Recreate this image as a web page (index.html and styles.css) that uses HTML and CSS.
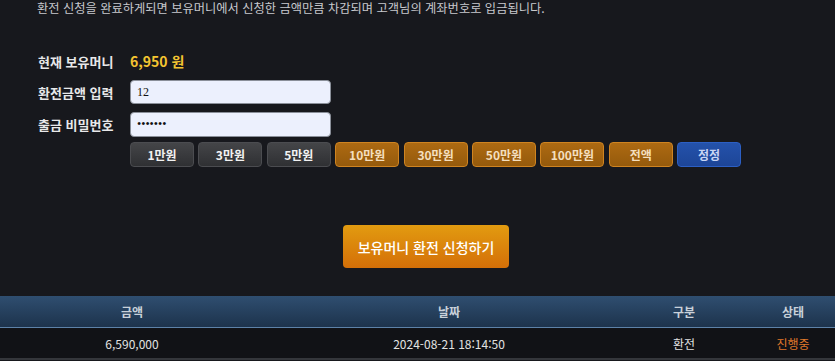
FILE: index.html
```html
<!DOCTYPE html>
<html lang="ko">
<head>
  <meta charset="UTF-8">
  <meta name="viewport" content="width=device-width, initial-scale=1.0">
  <title>보유머니 환전</title>
  <link rel="stylesheet" href="styles.css">
</head>
<body>
  <p class="notice">환전 신청을 완료하게되면 보유머니에서 신청한 금액만큼 차감되며 고객님의 계좌번호로 입금됩니다.</p>

  <div class="form">
    <div class="row row-money">
      <span class="label">현재 보유머니</span>
      <span class="money">6,950 원</span>
    </div>
    <div class="row row-amount">
      <label class="label" for="amount">환전금액 입력</label>
      <input id="amount" class="field" type="text" value="12">
    </div>
    <div class="row row-pass">
      <label class="label" for="pass">출금 비밀번호</label>
      <input id="pass" class="field" type="password" value="1234567">
    </div>
    <div class="quick">
      <button class="btn gray">1만원</button>
      <button class="btn gray">3만원</button>
      <button class="btn gray">5만원</button>
      <button class="btn orange">10만원</button>
      <button class="btn orange">30만원</button>
      <button class="btn orange">50만원</button>
      <button class="btn orange">100만원</button>
      <button class="btn orange">전액</button>
      <button class="btn blue">정정</button>
    </div>
  </div>

  <div class="submit-wrap">
    <button class="submit">보유머니 환전 신청하기</button>
  </div>

  <div class="history">
    <table>
      <colgroup>
        <col class="c1"><col class="c2"><col class="c3"><col class="c4">
      </colgroup>
      <thead>
        <tr><th>금액</th><th>날짜</th><th>구분</th><th>상태</th></tr>
      </thead>
      <tbody>
        <tr><td>6,590,000</td><td>2024-08-21 18:14:50</td><td>환전</td><td class="state">진행중</td></tr>
      </tbody>
    </table>
  </div>
</body>
</html>
```

FILE: styles.css
```css
body {
  margin: 0;
  background: #17181d;
  color: #e6e6e6;
  font-family: "Noto Sans CJK KR", "Noto Sans", sans-serif;
  overflow: hidden;
}

.notice {
  margin: 0;
  padding: 0 37px;
  font-size: 12.25px;
  line-height: 16px;
  color: #c8c9ce;
}

.form { padding: 33px 0 0 38px; }

.row { display: flex; align-items: center; }
.row-money { height: 24px; }
.row-amount { height: 24px; margin-top: 7px; }
.row-pass { height: 25px; margin-top: 8px; }

.label {
  width: 92px;
  font-size: 13px;
  font-weight: bold;
  color: #e8e8ea;
}

.money {
  font-size: 14px;
  font-weight: bold;
  color: #f4c531;
}

.field {
  box-sizing: border-box;
  width: 201px;
  height: 100%;
  padding: 0 6px;
  border: 1px solid #8a8f99;
  border-radius: 4px;
  background: #ecf0fd;
  color: #111;
  font-family: "Liberation Serif", serif;
  font-size: 12px;
  outline: none;
}

.quick {
  display: flex;
  gap: 4.4px;
  margin: 5px 0 0 92px;
}

.btn {
  box-sizing: border-box;
  width: 64px;
  height: 25px;
  padding: 0;
  border-radius: 4px;
  font-family: "Noto Sans CJK KR", sans-serif;
  font-size: 12px;
  font-weight: bold;
  cursor: pointer;
}
.btn.gray {
  background: linear-gradient(#444548, #2f3033);
  border: 1px solid #4b4c50;
  color: #f2f2f2;
}
.btn.orange {
  background: linear-gradient(#ad6a12, #955a0c);
  border: 1px solid #cf8421;
  color: #f4dfbf;
}
.btn.blue {
  background: linear-gradient(#2452ab, #1d4597);
  border: 1px solid #2c5fc4;
  color: #c9d5f4;
}

.submit-wrap {
  display: flex;
  justify-content: center;
  padding-left: 17px;
  margin-top: 58px;
}
.submit {
  width: 166px;
  height: 43px;
  border: none;
  border-radius: 4px;
  background: linear-gradient(#e29b10, #d46f08);
  color: #fff;
  font-family: "Noto Sans CJK KR", sans-serif;
  font-size: 14px;
  font-weight: 500;
}

.history { margin-top: 28px; width: 835px; overflow: hidden; }
table {
  width: 852px;
  border-collapse: collapse;
  table-layout: fixed;
  font-size: 12px;
}
.c1 { width: 264px; }
.c2 { width: 370px; }
.c3 { width: 100px; }
.c4 { width: 118px; }

th {
  height: 31px;
  padding: 0;
  background: linear-gradient(#2f4e70, #1d334c);
  border-bottom: 1px solid #5d82a8;
  color: #c9d1da;
  font-weight: bold;
}
td {
  height: 30px;
  padding: 0;
  text-align: center;
  background: #111216;
  border-bottom: 2px solid #34363b;
  color: #e2e2e2;
}
td.state { color: #e0782a; }
```
